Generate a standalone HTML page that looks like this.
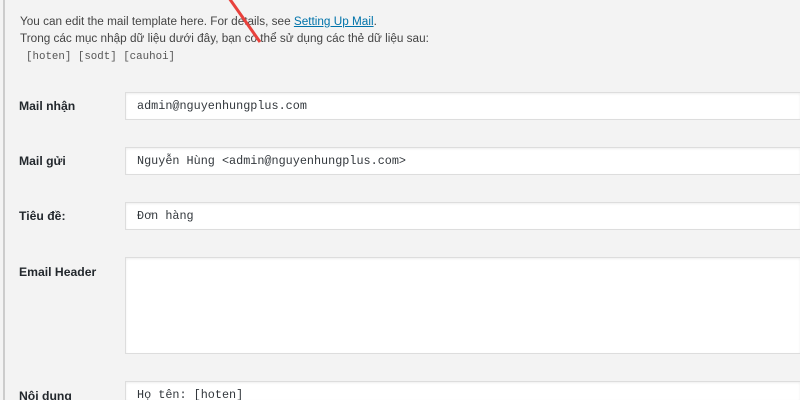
<!DOCTYPE html>
<html><head><meta charset="utf-8"><style>
html,body{margin:0;width:800px;height:400px;overflow:hidden}
body{background:#f3f3f3;font-family:"Liberation Sans",sans-serif;color:#444;position:relative}
.bar{position:absolute;left:3px;top:0;width:2px;height:400px;background:#ccc}
.t{position:absolute;left:20px;font-size:11.75px;color:#444;white-space:nowrap}
.code{position:absolute;left:26px;top:51px;font-family:"Liberation Mono",monospace;font-size:10.8px;color:#555}
a{color:#0073aa}
.lab{position:absolute;left:19px;font-size:12.2px;font-weight:bold;color:#23282d}
.in{position:absolute;left:125px;width:675px;background:#fff;border:1px solid #ddd;border-right:none;box-sizing:border-box;font-family:"Liberation Mono",monospace;font-size:11.8px;color:#32373c;padding-left:11px;box-shadow:inset 0 1px 2px rgba(0,0,0,.07);overflow:hidden}
</style></head><body>
<div class="bar"></div>
<div class="t" style="top:15px">You can edit the mail template here. For details, see <a href="#">Setting Up Mail</a>.</div>
<div class="t" style="top:32px">Trong các mục nhập dữ liệu dưới đây, bạn có thể sử dụng các thẻ dữ liệu sau:</div>
<div class="code">[hoten] [sodt] [cauhoi]</div>
<div class="lab" style="top:99px">Mail nhận</div>
<div class="in" style="top:92px;height:28px;line-height:26px">admin@nguyenhungplus.com</div>
<div class="lab" style="top:154px">Mail gửi</div>
<div class="in" style="top:147px;height:28px;line-height:26px">Nguyễn Hùng &lt;admin@nguyenhungplus.com&gt;</div>
<div class="lab" style="top:209px">Tiêu đề:</div>
<div class="in" style="top:202px;height:28px;line-height:26px">Đơn hàng</div>
<div class="lab" style="top:265px">Email Header</div>
<div class="in" style="top:257px;height:97px"></div>
<div class="lab" style="top:389px;height:11px;overflow:hidden">Nội dung</div>
<div class="in" style="top:381px;height:19px;line-height:26px;border-bottom:none">Họ tên: [hoten]</div>
<svg style="position:absolute;left:0;top:0" width="800" height="400"><line x1="229" y1="-2" x2="260" y2="42" stroke="#e8413c" stroke-width="3"/></svg>
</body></html>
